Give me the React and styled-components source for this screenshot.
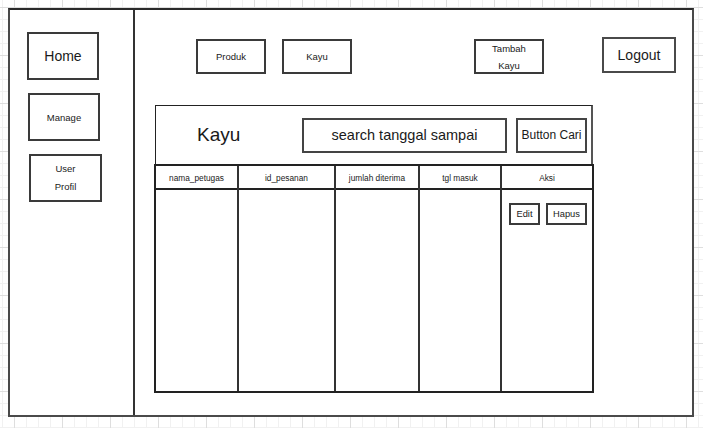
import React from "react";
import styled, { createGlobalStyle } from "styled-components";

const Global = createGlobalStyle`
  html, body {
    margin: 0;
    padding: 0;
  }
  body {
    width: 703px;
    height: 428px;
    overflow: hidden;
    font-family: "Liberation Sans", Arial, sans-serif;
    color: #1a1a1a;
    background-color: #ffffff;
    background-image:
      linear-gradient(to right, #dedede 1px, transparent 1px),
      linear-gradient(to bottom, #dedede 1px, transparent 1px),
      linear-gradient(to right, #f1f1f1 1px, transparent 1px),
      linear-gradient(to bottom, #f1f1f1 1px, transparent 1px);
    background-size: 48px 48px, 48px 48px, 12px 12px, 12px 12px;
    background-position: 14px 7px, 14px 7px, 2px 7px, 2px 7px;
  }
`;

const Page = styled.div`
  padding: 8px;
`;

const Frame = styled.div`
  box-sizing: border-box;
  width: 686px;
  height: 409px;
  display: flex;
  background: #fff;
  border: 2px solid #4a4a4a;
  border-top-color: #2a2a2a;
`;

const Sidebar = styled.nav`
  box-sizing: border-box;
  width: 125px;
  flex-shrink: 0;
  border-right: 2px solid #333;
  display: flex;
  flex-direction: column;
  gap: 13px;
  padding: 22px 0 0 17px;
`;

const Box = styled.div`
  box-sizing: border-box;
  border: 2px solid #3a3a3a;
  background: #fff;
  display: flex;
  align-items: center;
  justify-content: center;
  text-align: center;
  flex-shrink: 0;
`;

const SideButton = styled(Box)`
  width: ${(p) => p.$w || 72}px;
  height: 48px;
  margin-left: ${(p) => p.$shift || 0}px;
  font-size: ${(p) => (p.$big ? 14 : 9.5)}px;
  line-height: ${(p) => (p.$lh ? p.$lh : "normal")};
`;

const Main = styled.main`
  flex: 1;
  display: flex;
  flex-direction: column;
  padding: 0 16px 0 20px;
`;

const NavRow = styled.div`
  display: flex;
  align-items: flex-start;
  padding: 29px 0 0 41px;
`;

const NavGroup = styled.div`
  display: flex;
  align-items: flex-start;
  gap: ${(p) => p.$gap}px;
  margin-left: ${(p) => (p.$push ? "auto" : "0")};
`;

const NavButton = styled(Box)`
  width: 70px;
  height: 35px;
  font-size: 9.5px;
  line-height: 17px;
`;

const LogoutButton = styled(Box)`
  width: 74px;
  height: 36px;
  margin-top: -2px;
  font-size: 14px;
  border-color: #4a4a4a;
`;

const Panel = styled.section`
  box-sizing: border-box;
  margin-top: 31px;
  width: 438px;
  height: 59px;
  border: 1px solid #222;
  border-bottom: none;
  border-right: 2px solid #555;
  display: flex;
  align-items: center;
`;

const Title = styled.h1`
  margin: 0;
  box-sizing: border-box;
  width: 146px;
  padding-left: 41px;
  font-size: 19px;
  font-weight: normal;
  flex-shrink: 0;
`;

const SearchBox = styled(Box)`
  width: 205px;
  height: 35px;
  font-size: 14.5px;
  border-color: #444;
`;

const SearchButton = styled(Box)`
  width: 71px;
  height: 35px;
  margin-left: 9px;
  font-size: 12px;
  border-color: #444;
`;

const Table = styled.div`
  box-sizing: border-box;
  margin-left: -1px;
  width: 440px;
  height: 229px;
  border: 2px solid #222;
  display: grid;
  grid-template-columns: 83px 97px 84px 82px 1fr;
`;

const Column = styled.div`
  box-sizing: border-box;
  display: flex;
  flex-direction: column;
  border-right: ${(p) => (p.$last ? "none" : "2px solid #333")};
`;

const HeadCell = styled.div`
  height: 20px;
  border-bottom: 2px solid #222;
  display: flex;
  align-items: center;
  justify-content: center;
  font-size: 8.3px;
  padding-top: 2px;
`;

const BodyCell = styled.div`
  flex: 1;
  display: flex;
  align-items: flex-start;
  gap: 6px;
  padding: 13px 0 0 7px;
`;

const ActionButton = styled(Box)`
  width: ${(p) => p.$w}px;
  height: 22px;
  font-size: 9.3px;
`;

const columns = ["nama_petugas", "id_pesanan", "jumlah diterima", "tgl masuk", "Aksi"];

export default function App() {
  return (
    <>
      <Global />
      <Page>
        <Frame>
          <Sidebar>
            <SideButton $big>Home</SideButton>
            <SideButton $shift={1}>Manage</SideButton>
            <SideButton $shift={2} $w={73} $lh="18px">
              User
              <br />
              Profil
            </SideButton>
          </Sidebar>
          <Main>
            <NavRow>
              <NavGroup $gap={16}>
                <NavButton>Produk</NavButton>
                <NavButton>Kayu</NavButton>
              </NavGroup>
              <NavGroup $gap={58} $push>
                <NavButton>
                  Tambah
                  <br />
                  Kayu
                </NavButton>
                <LogoutButton>Logout</LogoutButton>
              </NavGroup>
            </NavRow>
            <Panel>
              <Title>Kayu</Title>
              <SearchBox>search tanggal sampai</SearchBox>
              <SearchButton>Button Cari</SearchButton>
            </Panel>
            <Table>
              {columns.map((c, i) => (
                <Column key={c} $last={i === columns.length - 1}>
                  <HeadCell>{c}</HeadCell>
                  <BodyCell>
                    {c === "Aksi" && (
                      <>
                        <ActionButton $w={31}>Edit</ActionButton>
                        <ActionButton $w={41}>Hapus</ActionButton>
                      </>
                    )}
                  </BodyCell>
                </Column>
              ))}
            </Table>
          </Main>
        </Frame>
      </Page>
    </>
  );
}
